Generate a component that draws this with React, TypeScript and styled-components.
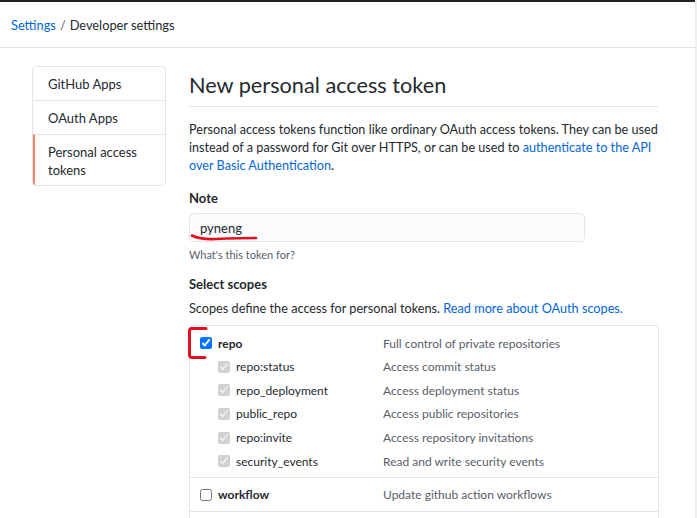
import React from "react";
import styled, { createGlobalStyle } from "styled-components";

const Global = createGlobalStyle`
  html, body { margin: 0; padding: 0; background: #fff; }
  body {
    font-family: Lato, "Noto Sans", sans-serif;
    font-size: 13px;
    color: #24292e;
    overflow: hidden;
  }
  * { box-sizing: border-box; }
`;

const Page = styled.div`
  position: relative;
  width: 697px;
  height: 518px;
  display: flex;
  overflow: hidden;
`;

const Viewport = styled.div`
  width: 695px;
  flex: none;
  border-top: 2px solid #1f2327;
`;

const ScrollStrip = styled.div`
  width: 2px;
  flex: none;
  background: #efefef;
`;

const Header = styled.header`
  height: 46px;
  border-bottom: 1px solid #e1e4e8;
  display: flex;
  align-items: center;
  padding-left: 11px;
  font-size: 12.8px;
`;

const Link = styled.a`
  color: #0366d6;
  text-decoration: none;
`;

const Sep = styled.span`
  color: #586069;
  margin: 0 4px;
`;

const Layout = styled.div`
  display: flex;
  gap: 23px;
  padding: 18px 0 0 32px;
`;

const Side = styled.nav`
  width: 134px;
  flex: none;
  align-self: flex-start;
  border: 1px solid #e1e4e8;
  border-radius: 4px;
  overflow: hidden;
`;

const SideItem = styled.div<{ $active?: boolean }>`
  padding: 8px 13px 7px;
  line-height: 18px;
  font-size: 13px;
  color: #24292e;
  border-left: 2px solid ${(p) => (p.$active ? "#f9826c" : "transparent")};
  & + & { border-top: 1px solid #e1e4e8; }
  &:last-child { padding-bottom: 6px; }
`;

const Main = styled.main`
  width: 469px;
  flex: none;
`;

const Title = styled.h1`
  margin: 0;
  font-size: 21.7px;
  font-weight: 400;
  line-height: 32px;
  padding: 3px 0 5px;
  border-bottom: 1px solid #e1e4e8;
`;

const Para = styled.p`
  margin: 14px 0 0;
  line-height: 18px;
  font-size: 12.65px;
  white-space: nowrap;
`;

const Label = styled.div<{ $top: number }>`
  margin-top: ${(p) => p.$top}px;
  font-weight: 700;
  font-size: 13px;
  line-height: 18px;
`;

const Input = styled.div`
  margin-top: 6px;
  width: 396px;
  height: 29px;
  background: #fafbfc;
  border: 1px solid #e1e4e8;
  border-radius: 5px;
  padding: 0 10px;
  display: flex;
  align-items: center;
  font-size: 13px;
`;

const Note = styled.div`
  margin-top: 5px;
  font-size: 11px;
  color: #586069;
  line-height: 16px;
`;

const Desc = styled.div`
  margin-top: 6px;
  font-size: 12.7px;
  line-height: 18px;
  white-space: nowrap;
`;

const ScopeBox = styled.div`
  margin-top: 8px;
  border: 1px solid #e1e4e8;
  border-radius: 5px;
  width: 470px;
`;

const Group = styled.div`
  padding: 5px 0 4px;
  & + & { border-top: 1px solid #e1e4e8; }
`;

const Row = styled.div<{ $sub?: boolean }>`
  display: grid;
  grid-template-columns: ${(p) => (p.$sub ? "165px" : "183px")} 1fr;
  padding-left: ${(p) => (p.$sub ? "28px" : "10px")};
  height: ${(p) => (p.$sub ? "23.6px" : "24px")};
  align-items: center;
  font-size: 12px;
`;

const Name = styled.label<{ $bold?: boolean }>`
  display: flex;
  align-items: center;
  gap: 6px;
  font-weight: ${(p) => (p.$bold ? 700 : 400)};
  color: #24292e;
`;

const Check = styled.input`
  margin: 0;
  width: 12px;
  height: 12px;
`;

const Info = styled.span`
  color: #586069;
`;

const Annot = styled.svg`
  position: absolute;
  left: 0;
  top: 0;
  pointer-events: none;
`;

const subs = [
  ["repo:status", "Access commit status"],
  ["repo_deployment", "Access deployment status"],
  ["public_repo", "Access public repositories"],
  ["repo:invite", "Access repository invitations"],
  ["security_events", "Read and write security events"],
];

export default function App() {
  return (
    <>
      <Global />
      <Page>
        <Viewport>
          <Header>
            <Link>Settings</Link>
            <Sep>/</Sep>
            <span>Developer settings</span>
          </Header>
          <Layout>
            <Side>
              <SideItem>GitHub Apps</SideItem>
              <SideItem>OAuth Apps</SideItem>
              <SideItem $active>Personal access tokens</SideItem>
            </Side>
            <Main>
              <Title>New personal access token</Title>
              <Para>
                Personal access tokens function like ordinary OAuth access tokens. They can be used
                <br />
                instead of a password for Git over HTTPS, or can be used to{" "}
                <Link>authenticate to the API</Link>
                <br />
                <Link>over Basic Authentication</Link>.
              </Para>
              <Label $top={14}>Note</Label>
              <Input>pyneng</Input>
              <Note>What's this token for?</Note>
              <Label $top={12}>Select scopes</Label>
              <Desc>
                Scopes define the access for personal tokens.{" "}
                <Link>Read more about OAuth scopes.</Link>
              </Desc>
              <ScopeBox>
                <Group>
                  <Row>
                    <Name $bold>
                      <Check type="checkbox" checked readOnly />
                      repo
                    </Name>
                    <Info>Full control of private repositories</Info>
                  </Row>
                  {subs.map(([n, d]) => (
                    <Row $sub key={n}>
                      <Name>
                        <Check type="checkbox" checked disabled readOnly />
                        {n}
                      </Name>
                      <Info>{d}</Info>
                    </Row>
                  ))}
                </Group>
                <Group>
                  <Row>
                    <Name $bold>
                      <Check type="checkbox" readOnly />
                      workflow
                    </Name>
                    <Info>Update github action workflows</Info>
                  </Row>
                </Group>
                <Group>
                  <Row />
                </Group>
              </ScopeBox>
            </Main>
          </Layout>
        </Viewport>
        <ScrollStrip />
        <Annot width="697" height="518" viewBox="0 0 697 518">
          <path
            d="M192 235.5 C198 238.5 206 239.5 216 239 C228 238.5 240 238 256 238"
            fill="none"
            stroke="#e3101d"
            strokeWidth="2.6"
            strokeLinecap="round"
          />
          <path
            d="M206 328.5 H192 Q189.5 328.5 189.5 331 V355 Q189.5 357.5 192 357.5 H205"
            fill="none"
            stroke="#e3101d"
            strokeWidth="3"
            strokeLinecap="round"
          />
        </Annot>
      </Page>
    </>
  );
}
